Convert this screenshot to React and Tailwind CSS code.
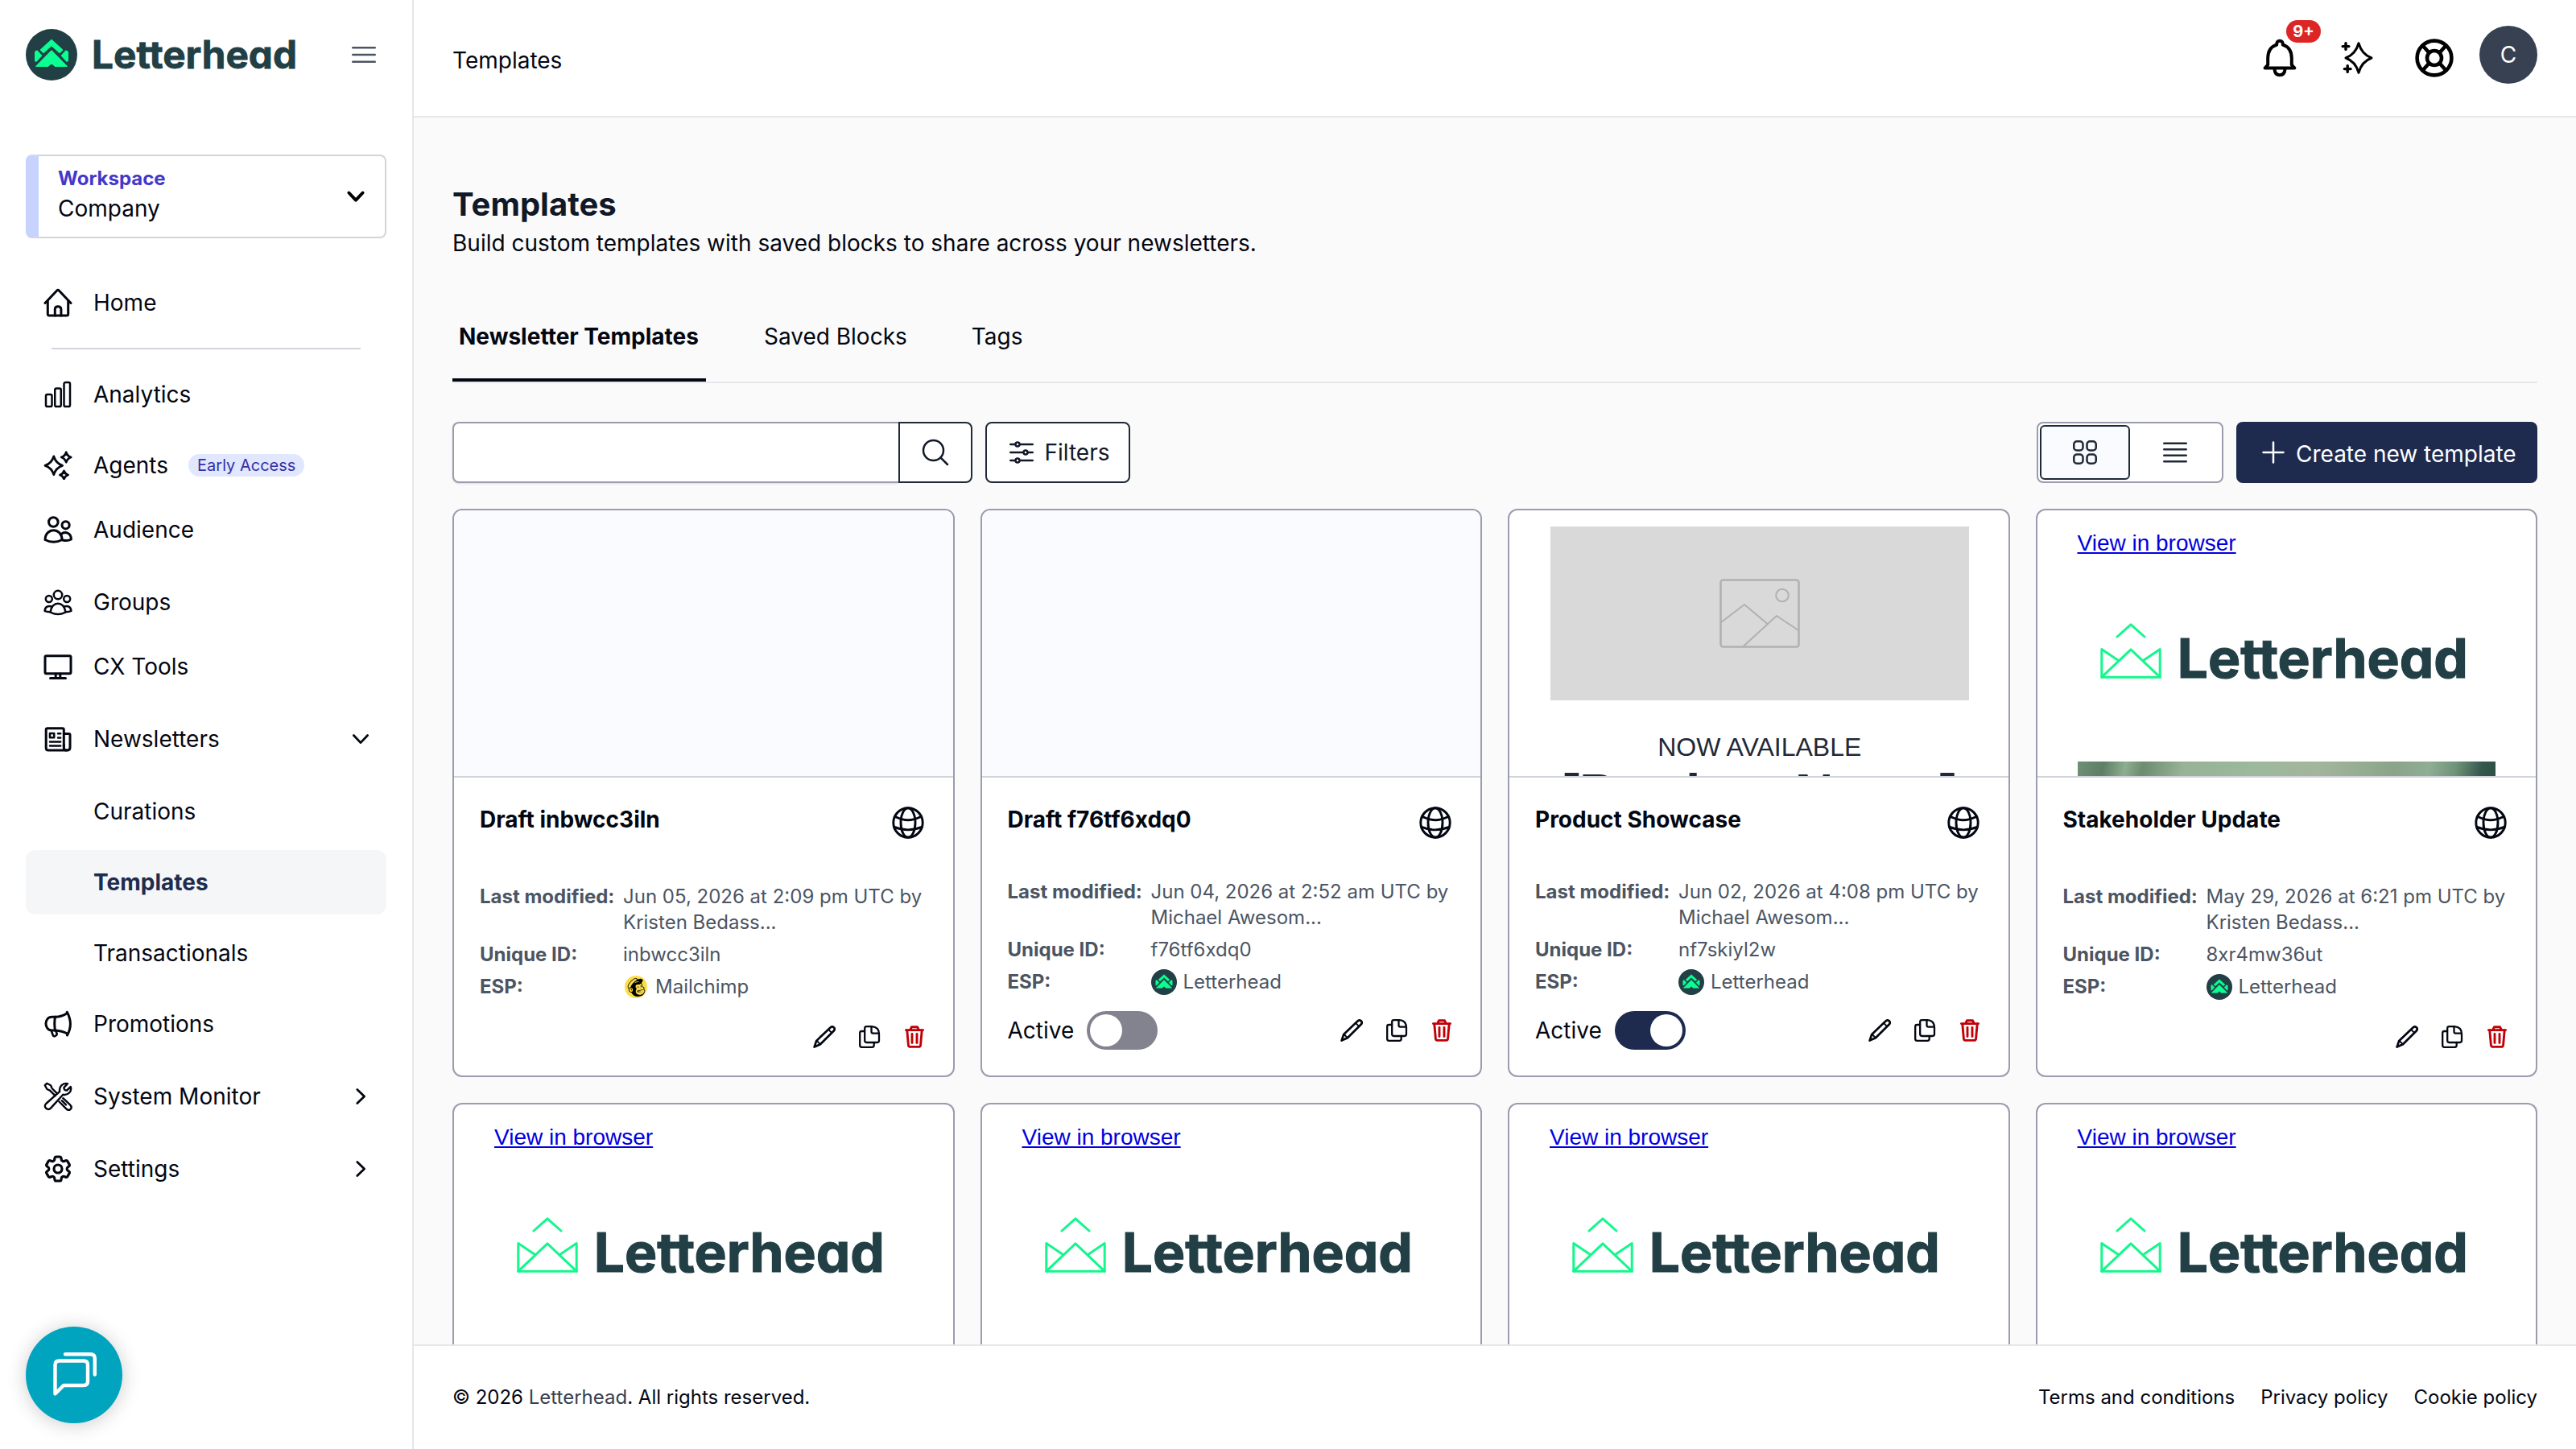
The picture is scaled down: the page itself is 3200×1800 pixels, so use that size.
// src/App.jsx
import {
  HiOutlineAdjustmentsHorizontal,
  HiOutlineBars3,
  HiOutlineBars4,
  HiOutlineChartBar,
  HiOutlineCog6Tooth,
  HiOutlineMagnifyingGlass,
  HiOutlinePlus,
  HiOutlineSquares2X2,
} from "react-icons/hi2";
import { SiMailchimp } from "react-icons/si";

/* ---------- icons ---------- */

function Icon({ size = 36, stroke = 3, className = "w-9 h-9", children }) {
  return (
    <svg
      viewBox={`0 0 ${size} ${size}`}
      className={className}
      fill="none"
      stroke="currentColor"
      strokeWidth={stroke}
      strokeLinecap="round"
      strokeLinejoin="round"
    >
      {children}
    </svg>
  );
}

// four pointed star with concave sides
const star = (cx, cy, rx, ry = rx) => {
  const a = rx * 0.24;
  const b = ry * 0.24;
  return `M${cx} ${cy - ry}Q${cx + a} ${cy - b} ${cx + rx} ${cy}Q${cx + a} ${cy + b} ${cx} ${cy + ry}Q${cx - a} ${cy + b} ${cx - rx} ${cy}Q${cx - a} ${cy - b} ${cx} ${cy - ry}Z`;
};

const HomeIcon = () => (
  <Icon>
    <path d="M2 18.5 16.4 3.2Q18 1.6 19.6 3.2L34 18.5" />
    <path d="M5.3 15.5V32Q5.3 34 7.3 34H28.7Q30.7 34 30.7 32V15.5" />
    <path d="M14.3 34V26Q14.3 22.8 18 22.8T21.9 26V34" />
  </Icon>
);

const AgentsIcon = () => (
  <Icon stroke={2.8}>
    <path d={star(12.8, 18.3, 10.8, 11.4)} />
    <path d={star(28.2, 8, 6, 6.2)} />
    <path d={star(25.5, 30, 5, 5)} />
  </Icon>
);

const AudienceIcon = () => (
  <Icon>
    <circle cx="12.3" cy="8.5" r="5.8" />
    <circle cx="27.6" cy="12.3" r="4.6" />
    <path d="M2 30.5C2.5 14.8 22.5 14.8 23.2 30.5Q12.5 36.2 2 30.5Z" />
    <path d="M22 23.5C26.5 19.5 34.5 21.5 34.4 30Q30 32.4 24 31" />
  </Icon>
);

const GroupsIcon = () => (
  <Icon stroke={2.5}>
    <circle cx="18" cy="9" r="5.2" />
    <circle cx="6.8" cy="14" r="4" />
    <circle cx="29.2" cy="14" r="4" />
    <path d="M8.5 30.5C10 16 26 16 27.5 30.5Q18 35.5 8.5 30.5Z" />
    <path d="M10.5 23.5C6 22 1.8 23.5 1.6 29Q4 30.3 8.5 30.3" />
    <path d="M25.5 23.5C30 22 34.2 23.5 34.4 29Q32 30.3 27.5 30.3" />
  </Icon>
);

const MonitorIcon = () => (
  <Icon>
    <rect x="2" y="4.8" width="32" height="22" rx="1.5" />
    <path d="M15.2 27V32M20.8 27V32M8.5 32.5H27.5" />
  </Icon>
);

const NewsIcon = () => (
  <Icon>
    <path d="M25.3 27.5V6.5Q25.3 4.8 23.5 4.8H5Q3.2 4.8 3.2 6.5V29Q3.2 32 6 32H29.5Q33 32 33 28.5V13Q33 11.5 31.5 11.5H25.5" />
    <path d="M25.3 25V29Q25.3 32 28.8 32" />
    <rect x="8" y="11" width="5.2" height="5.2" strokeWidth="2.6" />
    <path d="M18 11.2H21.2M18 16.4H21.2M8 21.4H21.2M8 26.5H21.2" strokeWidth="2.5" />
  </Icon>
);

const HornIcon = () => (
  <Icon>
    <path d="M14.5 9.3H10.5C0.5 9.3 0.5 26 10.5 26H14.5" />
    <path d="M14.5 9.3Q13 17.6 14.5 26" />
    <path d="M14.5 9.3Q23 9 29.5 4.5M14.5 26Q23 26.5 29.5 30" />
    <path d="M29.3 3.2Q37.4 18 29.5 32" />
    <path d="M9.8 26.5 11.8 32Q12.5 33.8 14.5 33T16.8 30.8L15.5 26.5" strokeWidth="2.6" />
  </Icon>
);

const ToolsIcon = () => (
  <Icon stroke={2.4}>
    <path d="M20.2 11.8C19 5.5 24.3 0.6 30 2.2L25.5 6.9Q25.2 10.4 29 10.5L33.8 6C35.6 11.8 30.5 17 24.3 15.8L9 32.6C5.5 36.5-1 31 3.2 27Z" />
    <path d="M1.8 4.2 4.2 1.8 9 4.3 10.6 8 17.2 14.6M1.8 4.2 4.4 9 8 10.6 14.6 17.2" />
    <path d="M24.3 20.2 33 28.4C37 32.6 32.2 37.4 28 33.2L19.5 24.5" />
    <path d="M22.8 23.2 28 28.4" />
  </Icon>
);

const BellIcon = () => (
  <Icon size={48} stroke={4} className="w-12 h-12">
    <path d="M20.2 7.5Q20 2.8 24 2.8T27.8 7.5Q38.5 11 38.8 24V32.5L42.4 36.6H5.6L9.2 32.5V24Q9.5 11 20.2 7.5Z" />
    <path d="M17.5 38Q18 45.3 24 45.3T30.5 38" />
  </Icon>
);

const SparklesIcon = () => (
  <Icon size={48} stroke={3} className="w-12 h-12">
    <path d={star(26, 24, 16, 18.3)} />
    <path d="M10 5.6V13.4M6.1 9.6H13.9M12.2 33.6V41.4M8.3 37.6H16.1" strokeWidth="3.4" />
  </Icon>
);

const LifebuoyIcon = () => (
  <Icon size={48} stroke={4.6} className="w-12 h-12">
    <circle cx="24" cy="24" r="21.4" />
    <circle cx="24" cy="24" r="9" />
    <path d="M9.5 8.5 17.5 17.5M38.5 8.5 30.5 17.5M9.5 39.5 17.5 30.5M38.5 39.5 30.5 30.5" />
  </Icon>
);

const GlobeIcon = () => (
  <Icon size={40} stroke={2.9} className="w-10 h-10">
    <circle cx="20" cy="20" r="18.2" />
    <ellipse cx="20" cy="20" rx="9" ry="18.2" />
    <path d="M4.2 12.4Q20 21 35.8 12.4M2.4 25.2Q20 32.6 37.6 25.2" />
  </Icon>
);

const PencilIcon = () => (
  <Icon size={28} stroke={2.7} className="w-7 h-7">
    <path d="M21.5 2.4Q23.8 0.4 25.8 2.3T25.8 6.5L9 23.2 1.6 26.6 4.2 18.9Z" />
    <path d="M19.8 5.6 22.8 8.6M5.2 19.5 8.6 22.9" strokeWidth="2" />
  </Icon>
);

const CopyIcon = () => (
  <Icon size={28} stroke={2.3} className="w-7 h-7">
    <path d="M10.5 1.2H17Q26 1.8 26 10.5V18.6Q26 21 23.6 21H10.5Q8.2 21 8.2 18.6V3.5Q8.2 1.2 10.5 1.2Z" />
    <path d="M16.5 1.3V7.5Q16.5 9.6 18.6 9.6H25.8" />
    <path d="M8 7H4.4Q2.2 7 2.2 9.2V24.6Q2.2 26.8 4.4 26.8H17.5Q19.7 26.8 19.7 24.6V21" />
  </Icon>
);

const TrashIcon = () => (
  <Icon size={28} stroke={2.9} className="w-7 h-7 text-[#c10007]">
    <path d="M3.4 5.6H24.6M8.8 5.2 10.4 1.8H17.6L19.2 5.2" />
    <path d="M4.8 6 6.4 24.2Q6.7 26.4 9 26.4H19Q21.3 26.4 21.6 24.2L23.2 6" />
    <path d="M11 10.5V21.5M17 10.5V21.5" />
  </Icon>
);

const ChevronDown = ({ stroke = 2.8 }) => (
  <Icon size={24} stroke={stroke} className="w-6 h-6">
    <path d="M3.4 7.5 12 16.6 20.6 7.5" />
  </Icon>
);

const ChevronRight = () => (
  <Icon size={24} stroke={2.8} className="w-6 h-6">
    <path d="M7.8 3.4 16.6 12 7.8 20.6" />
  </Icon>
);

/* ---------- brand ---------- */

function LogoMark({ className }) {
  return (
    <svg viewBox="0 0 64 64" className={className}>
      <circle cx="32" cy="32" r="32" fill="#213f45" />
      <g fill="#0bff93" stroke="#0bff93" strokeWidth="1.2" strokeLinejoin="round">
        <path d="M32 13.4 45.6 26 42 29.6 32 20.6 22 29.6 18.4 26Z" />
        <path d="M32 27 51.2 46.4H36.4L32 42.2 27.6 46.4H12.8Z" />
        <path d="M11.6 28.5 14 27 19.6 33.2 13.2 40.2 11.6 39.6Z" />
        <path d="M52.4 28.5 50 27 44.4 33.2 50.8 40.2 52.4 39.6Z" />
      </g>
    </svg>
  );
}

function Wordmark({ className }) {
  return (
    <svg viewBox="0 0 250 36" className={className}>
      <text
        x="-3"
        y="35"
        textLength="255"
        lengthAdjust="spacingAndGlyphs"
        fontFamily="Inter, sans-serif"
        fontWeight="700"
        fontSize="47.5"
        fill="#213f45"
        stroke="#213f45"
        strokeWidth="0.8"
        style={{ fontFeatureSettings: '"cv11"' }}
      >
        Letterhead
      </text>
    </svg>
  );
}

function Envelope() {
  return (
    <svg
      viewBox="0 0 76 69"
      className="w-[76px] h-[69px]"
      fill="none"
      stroke="#14f78c"
      strokeWidth="3"
      strokeLinejoin="round"
      strokeLinecap="round"
    >
      <path d="M21 17 38 1.8 55 17" />
      <path d="M22.5 46.5 1.8 32.5V67.2H74.2V32.5L53.5 46.5" />
      <path d="M1.8 67.2 38 32.8 74.2 67.2" />
    </svg>
  );
}

/* ---------- sidebar ---------- */

const navItems = [
  { label: "Analytics", icon: <HiOutlineChartBar className="w-10 h-10 shrink-0" />, gap: "mt-4" },
  { label: "Agents", icon: <AgentsIcon />, gap: "mt-2", badge: "Early Access" },
  { label: "Audience", icon: <AudienceIcon />, gap: "mt-0" },
  { label: "Groups", icon: <GroupsIcon />, gap: "mt-2.5" },
  { label: "CX Tools", icon: <MonitorIcon />, gap: "mt-0" },
  { label: "Newsletters", icon: <NewsIcon />, gap: "mt-2.5", chevron: "down" },
  { label: "Curations", gap: "mt-2.5" },
  { label: "Templates", gap: "mt-2", active: true },
  { label: "Transactionals", gap: "mt-2" },
  { label: "Promotions", icon: <HornIcon />, gap: "mt-2" },
  { label: "System Monitor", icon: <ToolsIcon />, gap: "mt-2.5", chevron: "right" },
  {
    label: "Settings",
    icon: <HiOutlineCog6Tooth className="w-10 h-10 shrink-0" strokeWidth={1.9} />,
    gap: "mt-2.5",
    chevron: "right",
  },
];

function NavRow({ item }) {
  return (
    <div
      className={`flex items-center h-20 pl-[22px] pr-5 rounded-xl text-[28px] ${item.gap} ${
        item.active ? "bg-[#f4f6f8] text-[#1e2c4f] font-bold" : "text-[#030712]"
      }`}
    >
      <span className="w-9 h-9 flex items-center justify-center shrink-0">{item.icon}</span>
      <span className="ml-[26px]">{item.label}</span>
      {item.badge && (
        <span className="ml-[25px] h-7 px-[11px] flex items-center rounded-full bg-[#e0e7ff] text-[#3730a3] text-[20px]">
          {item.badge}
        </span>
      )}
      {item.chevron && (
        <span className="ml-auto">{item.chevron === "down" ? <ChevronDown /> : <ChevronRight />}</span>
      )}
    </div>
  );
}

function Sidebar() {
  return (
    <aside className="relative w-[514px] shrink-0 h-full px-8 bg-white border-r-2 border-[#e5e7eb]">
      <div className="flex items-center h-16 mt-9">
        <LogoMark className="w-16 h-16" />
        <Wordmark className="w-[250px] h-9 ml-[21px] overflow-visible" />
        <HiOutlineBars3 className="w-10 h-10 ml-auto mr-2 text-[#4b5563]" />
      </div>

      <div className="flex items-center h-[104px] mt-[92px] rounded-lg border-2 border-l-16 border-[#d1d5db] border-l-[#c7d2fe] pl-6 pr-6">
        <div>
          <div className="text-2xl leading-8 font-bold text-[#4338ca] mt-[-2px]">Workspace</div>
          <div className="text-[28px] leading-10 text-[#030712] mt-px mb-0.5">Company</div>
        </div>
        <span className="ml-auto">
          <ChevronDown stroke={4} />
        </span>
      </div>

      <nav className="mt-10">
        <NavRow item={{ label: "Home", icon: <HomeIcon />, gap: "mt-0" }} />
        <div className="mx-8 mt-4 h-0.5 bg-[#d1d5db]" />
        {navItems.map((item) => (
          <NavRow key={item.label} item={item} />
        ))}
      </nav>

      <button className="absolute left-8 top-[1648px] w-[120px] h-[120px] rounded-full bg-[#00a4bf] shadow-[0_2px_24px_rgba(0,0,0,0.2)]">
        <svg
          viewBox="0 0 120 120"
          fill="none"
          stroke="#fff"
          strokeWidth="4.4"
          strokeLinecap="round"
          strokeLinejoin="round"
        >
          <path d="M36.5 83.5V47.5Q36.5 42.5 41.5 42.5H72Q77 42.5 77 47.5V68Q77 73 72 73H47Z" />
          <path d="M49 34.2H80.5Q85.8 34.2 85.8 39.5V59.5" />
        </svg>
      </button>
    </aside>
  );
}

/* ---------- header ---------- */

function Header() {
  return (
    <header className="flex items-start h-[146px] shrink-0 px-12 bg-white border-b-2 border-[#e5e7eb]">
      <div className="mt-[55px] text-[28px] leading-10 text-[#030712]">Templates</div>
      <div className="ml-auto flex items-start mt-8">
        <div className="relative mt-4">
          <BellIcon />
          <span className="absolute left-8 -top-[23px] w-[43px] h-7 flex items-center justify-center rounded-full bg-[#dc2626] text-white text-[20px] font-bold">
            9+
          </span>
        </div>
        <div className="ml-12 mt-4">
          <SparklesIcon />
        </div>
        <div className="ml-12 mt-4">
          <LifebuoyIcon />
        </div>
        <div className="ml-8 w-[72px] h-[72px] rounded-full bg-[#374151] text-white text-[28px] flex items-center justify-center">
          C
        </div>
      </div>
    </header>
  );
}

/* ---------- toolbar ---------- */

function Toolbar() {
  return (
    <div className="flex mt-12 h-[76px] text-[28px] text-[#111827]">
      <div className="w-[554px] bg-white border-2 border-r-0 border-[#9b9cae] rounded-l-lg shadow-sm" />
      <button className="w-[92px] flex items-center justify-center bg-white border-2 border-[#1f2937] rounded-r-lg">
        <HiOutlineMagnifyingGlass className="w-10 h-10" />
      </button>
      <button className="ml-4 w-[180px] flex items-center justify-center gap-2 bg-white border-2 border-[#1f2937] rounded-lg">
        <HiOutlineAdjustmentsHorizontal className="w-10 h-10" />
        Filters
      </button>

      <div className="ml-auto flex w-[232px] p-0.5 bg-white border-2 border-[#9b9cae] rounded-lg">
        <div className="w-[112px] flex items-center justify-center bg-[#f9fbff] border-2 border-[#1f2937] rounded-md">
          <HiOutlineSquares2X2 className="w-10 h-10 text-[#1f2937]" />
        </div>
        <div className="flex-1 flex items-center justify-center">
          <HiOutlineBars4 className="w-10 h-10 text-[#1f2937]" />
        </div>
      </div>
      <button className="ml-4 w-[374px] flex items-center pl-[26px] bg-[#1e2b4f] text-white rounded-lg">
        <HiOutlinePlus className="w-10 h-10" />
        <span className="ml-2 mt-[3px]">Create new template</span>
      </button>
    </div>
  );
}

/* ---------- cards ---------- */

function NewsletterPreview() {
  return (
    <div className="px-[50px] font-['Liberation_Sans',Arial,sans-serif]">
      <div className="pt-[21px] text-[28px] leading-10 text-[#0000e0] underline">View in browser</div>
      <div className="flex items-end mt-[79px] ml-7 h-[69px]">
        <Envelope />
        <Wordmark className="w-[354px] h-[51px] ml-6 overflow-visible" />
      </div>
      <div className="mt-[103px] h-40 bg-[linear-gradient(100deg,#6f8f76_0%,#5d7f66_6%,#8fae8f_11%,#6d8c70_15%,#97b294_24%,#9cb99c_40%,#a3b59b_55%,#92ac90_66%,#8aa389_72%,#8fae94_80%,#6f9479_86%,#35584d_92%,#25463f_100%)]" />
    </div>
  );
}

function ProductPreview() {
  return (
    <div className="pt-5 pl-[51px] pr-[49px] font-['Liberation_Sans',Arial,sans-serif] text-center text-[#1f2937]">
      <div className="h-[216px] bg-[#d9d9d9] flex items-center justify-center">
        <svg viewBox="0 0 100 86" className="w-[100px] h-[86px]" fill="none" stroke="#b1b1b1" strokeWidth="2">
          <rect x="1.5" y="1.5" width="97" height="83" rx="3" strokeWidth="2.6" />
          <circle cx="78" cy="20.5" r="7.8" />
          <path d="M2 54 31 32 59.5 56M29.5 84 71 46 98 64" strokeLinejoin="round" />
        </svg>
      </div>
      <div className="mt-[38px] text-[32px] leading-10">NOW AVAILABLE</div>
      <div className="text-[66px] leading-[74px] font-bold whitespace-nowrap">[Product Name]</div>
    </div>
  );
}

function TemplateCard({ card }) {
  return (
    <div className="h-[706px] flex flex-col bg-white border-2 border-[#9b9cae] rounded-xl overflow-hidden">
      <div className="h-[332px] shrink-0 overflow-hidden border-b-2 border-[#d1d5db]">
        {card.preview === "newsletter" && <NewsletterPreview />}
        {card.preview === "product" && <ProductPreview />}
        {!card.preview && <div className="h-full bg-[#f9fbff]" />}
      </div>

      <div className="flex-1 flex flex-col pt-8 pb-8 pl-8 pr-[34px]">
        <div className="flex items-start justify-between">
          <h3 className="text-[28px] leading-10 font-bold text-[#030712]">{card.title}</h3>
          <span className="mt-1 mr-0.5">
            <GlobeIcon />
          </span>
        </div>

        <div
          className={`grid grid-cols-[178px_1fr] gap-y-2 text-2xl leading-8 text-[#4b5563] ${
            card.toggle ? "mt-[50px]" : "mt-[56px]"
          }`}
        >
          <div className="font-bold whitespace-nowrap">Last modified:</div>
          <div className="whitespace-nowrap">
            {card.date} by
            <br />
            {card.author}
          </div>
          <div className="font-bold">Unique ID:</div>
          <div>{card.id}</div>
          <div className="font-bold">ESP:</div>
          <div className="flex items-center gap-2">
            {card.esp === "Mailchimp" ? (
              <span className="w-7 h-7 mx-0.5 flex items-center justify-center rounded-full bg-[#fbdd4c] text-black">
                <SiMailchimp className="w-[23px] h-[23px]" />
              </span>
            ) : (
              <LogoMark className="w-8 h-8" />
            )}
            {card.esp}
          </div>
        </div>

        <div className={`mt-auto flex items-center ${card.toggle ? "h-12" : "h-8"}`}>
          {card.toggle && <span className="text-[28px] text-[#030712]">Active</span>}
          {card.toggle === "off" && (
            <span className="ml-4 w-[88px] h-12 p-1 rounded-full bg-[#82838f] flex">
              <span className="w-10 h-10 rounded-full bg-white" />
            </span>
          )}
          {card.toggle === "on" && (
            <span className="ml-4 w-[88px] h-12 p-1 rounded-full bg-[#1e2b4f] flex justify-end">
              <span className="w-10 h-10 rounded-full bg-white" />
            </span>
          )}
          <div className="ml-auto flex gap-7 text-[#030712]">
            <PencilIcon />
            <CopyIcon />
            <TrashIcon />
          </div>
        </div>
      </div>
    </div>
  );
}

const cards = [
  {
    title: "Draft inbwcc3iln",
    date: "Jun 05, 2026 at 2:09 pm UTC",
    author: "Kristen Bedass...",
    id: "inbwcc3iln",
    esp: "Mailchimp",
  },
  {
    title: "Draft f76tf6xdq0",
    date: "Jun 04, 2026 at 2:52 am UTC",
    author: "Michael Awesom...",
    id: "f76tf6xdq0",
    esp: "Letterhead",
    toggle: "off",
  },
  {
    title: "Product Showcase",
    date: "Jun 02, 2026 at 4:08 pm UTC",
    author: "Michael Awesom...",
    id: "nf7skiyl2w",
    esp: "Letterhead",
    toggle: "on",
    preview: "product",
  },
  {
    title: "Stakeholder Update",
    date: "May 29, 2026 at 6:21 pm UTC",
    author: "Kristen Bedass...",
    id: "8xr4mw36ut",
    esp: "Letterhead",
    preview: "newsletter",
  },
];

export default function App() {
  return (
    <div className="flex w-[3200px] h-[1800px] overflow-hidden bg-[#fafafa] font-['Inter',sans-serif]">
      <Sidebar />

      <div className="flex-1 flex flex-col min-w-0">
        <Header />

        <main className="flex-1 min-h-0 overflow-hidden px-12 pt-[84px] text-[#030712]">
          <h1 className="text-[40px] leading-12 font-bold text-[#111827]">Templates</h1>
          <p className="mt-1 text-[28px] leading-10">
            Build custom templates with saved blocks to share across your newsletters.
          </p>

          <div className="flex gap-16 mt-[76px] text-[28px] leading-10 border-b-2 border-[#e5e7eb]">
            <div className="pl-2 pr-[9px] pb-8 font-bold border-b-4 border-[#030712]">Newsletter Templates</div>
            <div className="px-2">Saved Blocks</div>
            <div className="px-2">Tags</div>
          </div>

          <Toolbar />

          <div className="grid grid-cols-4 gap-8 mt-8">
            {cards.map((card) => (
              <TemplateCard key={card.id} card={card} />
            ))}
            {/* second row is cut off by the footer, only the preview shows */}
            {[1, 2, 3, 4].map((n) => (
              <div
                key={n}
                className="h-[300px] bg-white border-2 border-b-0 border-[#9b9cae] rounded-t-xl overflow-hidden"
              >
                <NewsletterPreview />
              </div>
            ))}
          </div>
        </main>

        <footer className="flex items-center justify-between h-[130px] shrink-0 px-12 bg-white border-t-2 border-[#e5e7eb] text-2xl text-[#030712]">
          <div>
            © 2026 <span className="text-[#374151]">Letterhead</span>. All rights reserved.
          </div>
          <div className="flex gap-8">
            <span>Terms and conditions</span>
            <span>Privacy policy</span>
            <span>Cookie policy</span>
          </div>
        </footer>
      </div>
    </div>
  );
}
